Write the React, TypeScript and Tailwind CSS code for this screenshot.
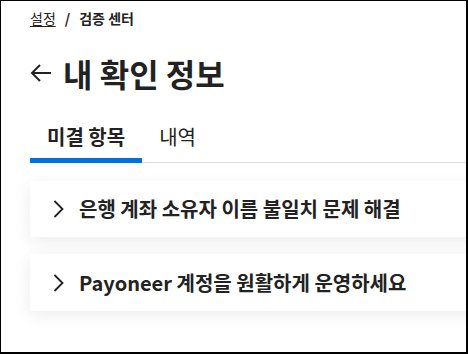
import React from "react";

export default function App() {
  const font = { fontFamily: '"Noto Sans CJK KR", "Noto Sans", sans-serif' };
  return (
    <div
      className="w-[468px] h-[354px] overflow-hidden bg-white border-l border-t border-r-2 border-b-2 border-black text-[#222]"
      style={font}
    >
      <div className="pl-[29px]">
        <div className="flex items-center gap-[7px] pt-[7px] text-[14px] leading-[20px]">
          <span className="underline underline-offset-2">설정</span>
          <span className="font-bold px-[2px]">/</span>
          <span className="font-bold">검증 센터</span>
        </div>
        <div className="flex items-center mt-[25px] h-[40px]">
          <svg width="21" height="20" viewBox="0 0 21 20" fill="none" stroke="#222" strokeWidth="2" className="mr-[12px]">
            <path d="M21 10H2M10 2L2 10L10 18" />
          </svg>
          <span className="text-[32px] font-bold leading-[40px]">내 확인 정보</span>
        </div>
        <div className="flex mt-[30px] border-b border-[#dcdcdc]">
          <div className="px-[17px] pb-[7px] border-b-[5px] border-[#0070e0] -mb-px text-[20px] font-bold leading-[28px]">
            미결 항목
          </div>
          <div className="px-[17px] pb-[7px] text-[20px] leading-[28px]">내역</div>
        </div>
        <div className="flex flex-col gap-[17px] mt-[18px]">
          <div className="flex items-center h-[56px] bg-white pl-[23px] shadow-[0_4px_16px_rgba(0,0,0,0.08)] mr-[-20px]">
            <svg width="11" height="18" viewBox="0 0 11 18" fill="none" stroke="#222" strokeWidth="1.8" className="mr-[15px]">
              <path d="M1.5 1L9.5 9L1.5 17" />
            </svg>
            <span className="text-[20px] font-bold leading-[28px]">은행 계좌 소유자 이름 불일치 문제 해결</span>
          </div>
          <div className="flex items-center h-[57px] bg-white pl-[23px] shadow-[0_4px_16px_rgba(0,0,0,0.08)] mr-[-20px]">
            <svg width="11" height="18" viewBox="0 0 11 18" fill="none" stroke="#222" strokeWidth="1.8" className="mr-[15px]">
              <path d="M1.5 1L9.5 9L1.5 17" />
            </svg>
            <span className="text-[20px] font-bold leading-[28px]">Payoneer 계정을 원활하게 운영하세요</span>
          </div>
        </div>
      </div>
    </div>
  );
}
